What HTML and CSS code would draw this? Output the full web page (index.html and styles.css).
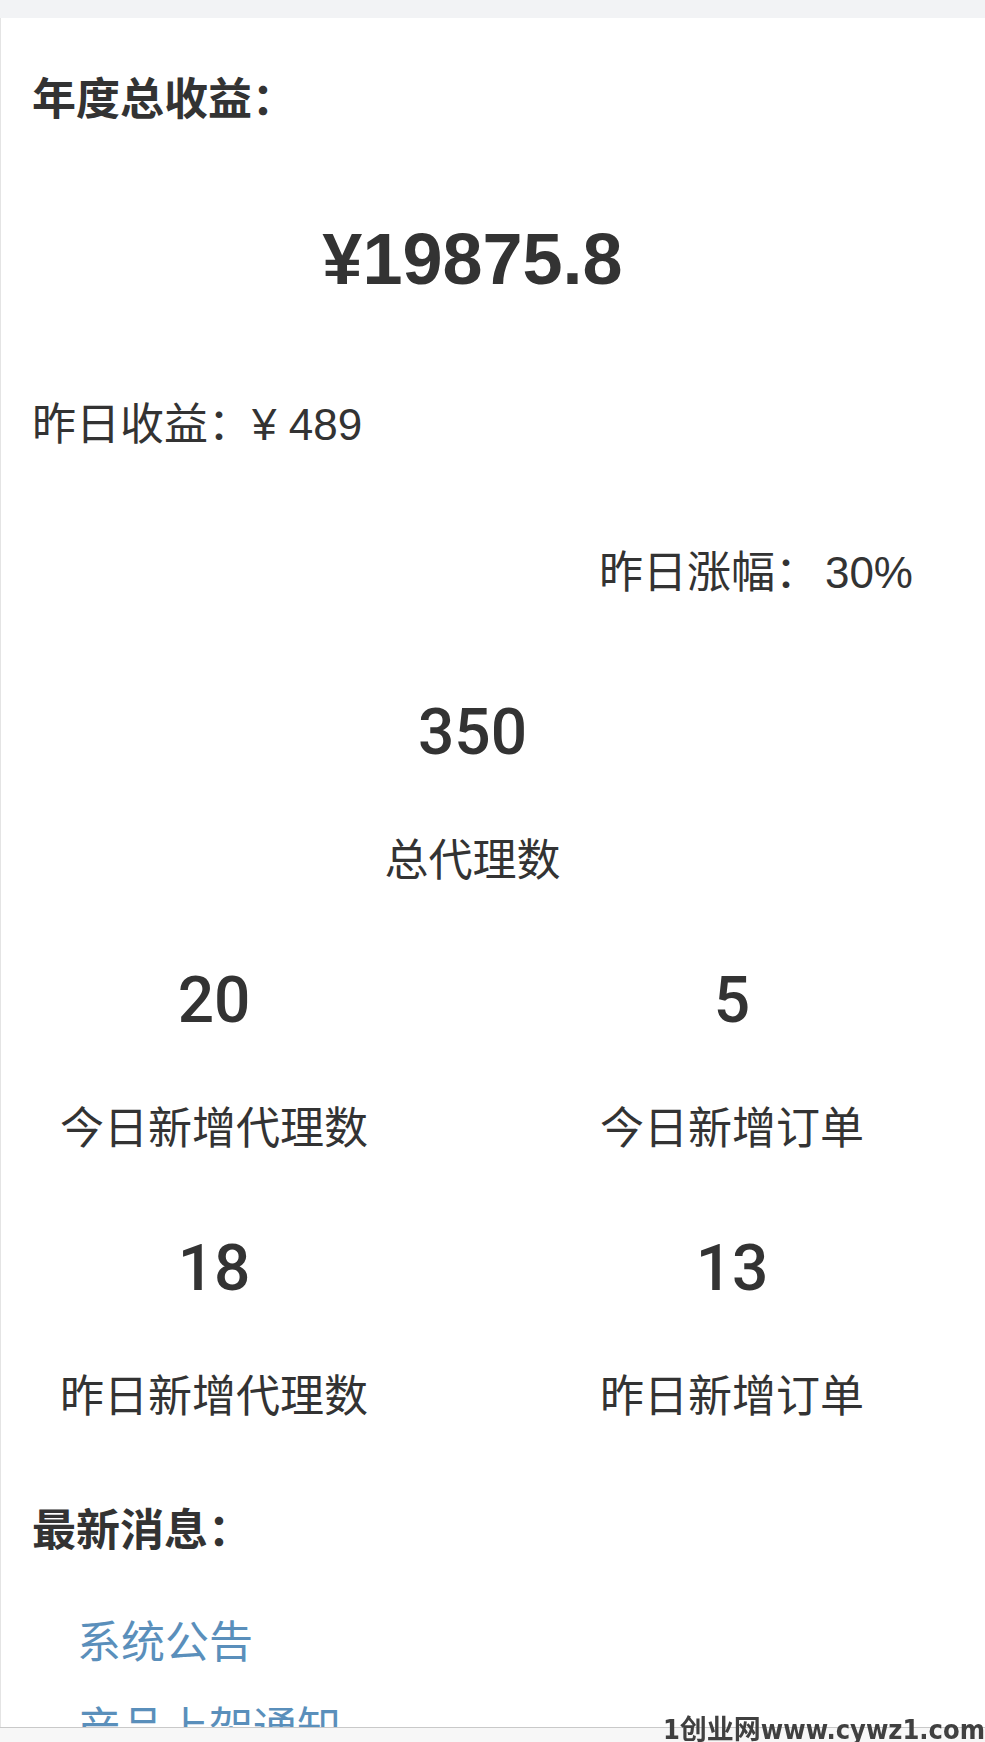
FILE: index.html
```html
<!DOCTYPE html>
<html lang="zh-CN">
<head>
<meta charset="utf-8">
<title>收益概览</title>
<link rel="stylesheet" href="styles.css">
</head>
<body>
<main class="card">
  <h2 class="section-title">年度总收益：</h2>
  <div class="total">¥19875.8</div>
  <p class="line">昨日收益：¥ 489</p>
  <p class="line growth">昨日涨幅：<span class="value">30%</span></p>

  <div class="stat stat-main">
    <div class="stat-num">350</div>
    <div class="stat-label">总代理数</div>
  </div>

  <div class="stats-grid">
    <div class="stat">
      <div class="stat-num">20</div>
      <div class="stat-label">今日新增代理数</div>
    </div>
    <div class="stat">
      <div class="stat-num">5</div>
      <div class="stat-label">今日新增订单</div>
    </div>
    <div class="stat">
      <div class="stat-num">18</div>
      <div class="stat-label">昨日新增代理数</div>
    </div>
    <div class="stat">
      <div class="stat-num">13</div>
      <div class="stat-label">昨日新增订单</div>
    </div>
  </div>

  <h2 class="section-title news-title">最新消息：</h2>
  <ul class="news">
    <li><a href="#">系统公告</a></li>
    <li><a href="#">产品上架通知</a></li>
    <li><a href="#">活动通知</a></li>
  </ul>
</main>
<div class="bottom-bar"></div>
<div class="watermark">1创业网www.cywz1.com</div>
</body>
</html>
```
FILE: styles.css
```css
html, body {
  margin: 0;
  padding: 0;
}
body {
  background: #f2f3f5;
  color: #333333;
  font-family: "Liberation Sans", "Noto Sans CJK SC", sans-serif;
  overflow: hidden;
  height: 1742px;
}
.card {
  margin-top: 18px;
  background: #ffffff;
  border-left: 1px solid #e4e4e4;
  padding: 52px 72px 0 31px;
  min-height: 1800px;
}
.section-title {
  margin: 0;
  font-size: 44px;
  line-height: 60px;
  font-weight: 700;
}
.total {
  margin-top: 84px;
  font-size: 72px;
  line-height: 90px;
  font-weight: 700;
  text-align: center;
}
.line {
  margin: 91px 0 0;
  font-size: 44px;
  line-height: 60px;
}
.growth {
  margin-top: 88px;
  text-align: right;
}
.growth .value {
  margin-left: 6px;
}
.stat {
  text-align: center;
}
.stat-main {
  margin-top: 90px;
}
.stat-num {
  font-family: Roboto, "Liberation Sans", sans-serif;
  font-size: 64px;
  line-height: 80px;
  font-weight: 500;
}
.stat-label {
  margin-top: 58px;
  font-size: 44px;
  line-height: 60px;
}
.stats-grid {
  margin: 70px -33px 0 -32px;
  display: grid;
  grid-template-columns: 1fr 1fr;
  column-gap: 90px;
  row-gap: 70px;
}
.news-title {
  margin-top: 74px;
}
.news {
  margin: 52px 0 0;
  padding: 0 0 0 45px;
  list-style: none;
}
.news li {
  font-size: 44px;
  line-height: 60px;
  margin-bottom: 26px;
}
.news a {
  color: #5a8fbb;
  text-decoration: none;
}
.bottom-bar {
  position: fixed;
  left: 0;
  right: 0;
  bottom: 0;
  height: 14px;
  border-top: 1px solid #c9c9c9;
  background: #f7f7f7;
}
.watermark {
  position: fixed;
  right: 0;
  bottom: -3px;
  font-family: "DejaVu Sans Condensed", "Noto Sans CJK SC", sans-serif;
  font-weight: 700;
  font-size: 27px;
  line-height: 30px;
  color: #404040;
  white-space: nowrap;
}
```
